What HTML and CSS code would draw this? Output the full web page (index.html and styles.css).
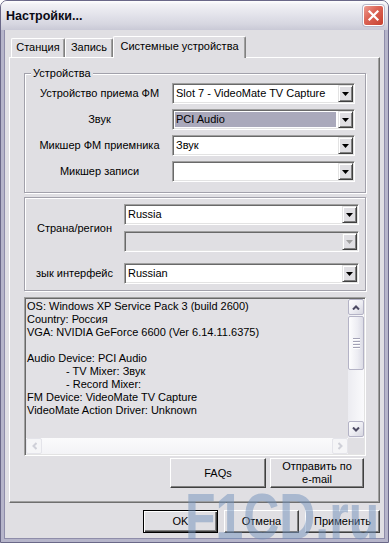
FILE: index.html
```html
<!DOCTYPE html>
<html lang="ru">

<head>
    <meta charset="UTF-8">
    <meta name="viewport" content="width=device-width, initial-scale=1.0">
    <title>Настройки...</title>
    <link rel="stylesheet" href="styles.css">
</head>

<body>
    <div class="window">
        <div class="titlebar">
            <span class="title">Настройки...</span>
            <span class="close">
                <svg width="13" height="13" viewBox="0 0 13 13"><path d="M2.5 2.5l8 8M10.5 2.5l-8 8" stroke="#fff" stroke-width="2.2" stroke-linecap="square"/></svg>
            </span>
        </div>
        <div class="client">
            <div class="tabs">
                <div class="tab tab-station">Станция</div>
                <div class="tab tab-record">Запись</div>
                <div class="tab active">Системные устройства</div>
            </div>
            <div class="page">
                <fieldset class="group devices">
                    <legend>Устройства</legend>
                    <label>Устройство приема ФМ</label>
                    <div class="combo">
                        <span class="value">Slot 7 - VideoMate TV Capture</span>
                        <span class="drop"><svg width="7" height="4" viewBox="0 0 7 4"><path d="M0 0h7L3.5 4z"/></svg></span>
                    </div>
                    <label>Звук</label>
                    <div class="combo selected">
                        <span class="value">PCI Audio</span>
                        <span class="drop"><svg width="7" height="4" viewBox="0 0 7 4"><path d="M0 0h7L3.5 4z"/></svg></span>
                    </div>
                    <label>Микшер ФМ приемника</label>
                    <div class="combo">
                        <span class="value">Звук</span>
                        <span class="drop"><svg width="7" height="4" viewBox="0 0 7 4"><path d="M0 0h7L3.5 4z"/></svg></span>
                    </div>
                    <label>Микшер записи</label>
                    <div class="combo">
                        <span class="value"></span>
                        <span class="drop"><svg width="7" height="4" viewBox="0 0 7 4"><path d="M0 0h7L3.5 4z"/></svg></span>
                    </div>
                </fieldset>

                <div class="group region">
                    <label class="country">Страна/регион</label>
                    <div class="combo">
                        <span class="value">Russia</span>
                        <span class="drop"><svg width="7" height="4" viewBox="0 0 7 4"><path d="M0 0h7L3.5 4z"/></svg></span>
                    </div>
                    <div class="combo disabled">
                        <span class="value"></span>
                        <span class="drop"><svg width="7" height="4" viewBox="0 0 7 4"><path d="M0 0h7L3.5 4z"/></svg></span>
                    </div>
                    <label class="lang">зык интерфейс</label>
                    <div class="combo lang-combo">
                        <span class="value">Russian</span>
                        <span class="drop"><svg width="7" height="4" viewBox="0 0 7 4"><path d="M0 0h7L3.5 4z"/></svg></span>
                    </div>
                </div>

                <div class="info">
                    <div class="info-text">
                        <div>OS: Windows XP Service Pack 3 (build 2600)</div>
                        <div>Country: Россия</div>
                        <div>VGA: NVIDIA GeForce 6600 (Ver 6.14.11.6375)</div>
                        <div>&nbsp;</div>
                        <div>Audio Device: PCI Audio</div>
                        <div class="indent">- TV Mixer: Звук</div>
                        <div class="indent">- Record Mixer:</div>
                        <div>FM Device: VideoMate TV Capture</div>
                        <div>VideoMate Action Driver: Unknown</div>
                    </div>
                    <div class="vscroll">
                        <span class="sbtn"><svg width="8" height="5" viewBox="0 0 8 5"><polyline points="1,4.5 4,1.5 7,4.5" fill="none" stroke="#4d4b63" stroke-width="2"/></svg></span>
                        <span class="thumb"><i></i><i></i><i></i><i></i></span>
                        <span class="sbtn down"><svg width="8" height="5" viewBox="0 0 8 5"><polyline points="1,0.5 4,3.5 7,0.5" fill="none" stroke="#4d4b63" stroke-width="2"/></svg></span>
                    </div>
                    <div class="hscroll">
                        <span class="sbtn off"><svg width="5" height="8" viewBox="0 0 5 8"><polyline points="4.5,1 1.5,4 4.5,7" fill="none" stroke="#cfd0d8" stroke-width="2"/></svg></span>
                        <span class="sbtn off"><svg width="5" height="8" viewBox="0 0 5 8"><polyline points="0.5,1 3.5,4 0.5,7" fill="none" stroke="#cfd0d8" stroke-width="2"/></svg></span>
                    </div>
                    <div class="corner"></div>
                </div>

                <div class="links">
                    <button class="btn faq">FAQs</button>
                    <button class="btn mail">Отправить по<br>e-mail</button>
                </div>
            </div>

            <div class="actions">
                <button class="btn default">OK</button>
                <button class="btn">Отмена</button>
                <button class="btn">Применить</button>
            </div>
        </div>
        <div class="watermark">F1CD.ru</div>
    </div>
</body>

</html>
```

FILE: styles.css
```css
* {
    margin: 0;
    padding: 0;
    box-sizing: border-box;
}

body {
    background: #ffffff;
    font-family: "Liberation Sans", Arial, sans-serif;
    font-size: 11px;
    color: #000;
}

.window {
    position: relative;
    width: 389px;
    height: 543px;
    display: flex;
    flex-direction: column;
    background: #e0dfe3;
    border: 1px solid #6a6888;
    border-radius: 7px 7px 0 0;
    overflow: hidden;
}

/* title bar */

.titlebar {
    flex: none;
    height: 29px;
    display: flex;
    align-items: center;
    justify-content: space-between;
    padding: 0 4px 0 5px;
    background: linear-gradient(#ffffff 0%, #f1f1f5 12%, #e2e2ea 50%, #d6d6e0 80%, #c9c9d6 100%);
}

.title {
    font-weight: 700;
    font-size: 12.5px;
    color: #0a0a14;
}

.close {
    width: 21px;
    height: 21px;
    display: flex;
    align-items: center;
    justify-content: center;
    border: 1px solid #ffffff;
    border-radius: 3px;
    background: linear-gradient(135deg, #ee9d92 0%, #dc6658 40%, #c8412f 100%);
    box-shadow: 0 0 0 1px #b9b8c9;
}

/* client area */

.client {
    flex: 1;
    display: flex;
    flex-direction: column;
    border: 3px solid #b6b5ca;
    border-top: none;
    box-shadow: inset 1px 0 #8f8daa, inset -1px 0 #8f8daa, inset 0 -1px #8f8daa;
}

.tabs {
    height: 21px;
    margin-top: 6px;
    padding-left: 7px;
    display: flex;
    align-items: flex-end;
}

.tab {
    height: 19px;
    line-height: 17px;
    text-align: center;
    white-space: nowrap;
    border: 1px solid;
    border-color: #ffffff #808080 transparent #ffffff;
    border-bottom: none;
    border-radius: 2px 2px 0 0;
    box-shadow: inset -1px 0 #a0a0a0;
}

.tab-station {
    width: 54px;
}

.tab-record {
    width: 48px;
}

.tab.active {
    position: relative;
    z-index: 1;
    width: 133px;
    height: 22px;
    line-height: 18px;
    margin-bottom: -1px;
    background: #e0dfe3;
}

.page {
    height: 446px;
    margin: 0 5px;
    padding: 9px 13px 14px 14px;
    display: flex;
    flex-direction: column;
    border: 1px solid;
    border-color: #ffffff #6f6f6f #6f6f6f #ffffff;
    box-shadow: inset -1px -1px #a0a0a0;
}

/* group boxes */

.group {
    width: 342px;
    border: 1px solid #a2a1ab;
    box-shadow: 1px 1px #ffffff, inset 1px 1px #ffffff;
}

.group label {
    text-align: center;
    white-space: nowrap;
    line-height: 21px;
}

.devices {
    padding: 3px 10px 10px 2px;
    display: grid;
    grid-template-columns: 145px 183px;
    grid-auto-rows: 21px;
    row-gap: 5px;
}

.devices legend {
    margin-left: 4px;
    padding: 0 2px;
    line-height: 13px;
    background: #e0dfe3;
}

.region {
    margin-top: 4px;
    padding: 6px 6px 6px 0;
    display: grid;
    grid-template-columns: 99px 235px;
    grid-template-rows: 21px 21px 26px;
    row-gap: 6px;
}

.region .country {
    grid-row: 1 / span 2;
    align-self: center;
    line-height: 13px;
}

.region .lang,
.region .lang-combo {
    align-self: end;
}

/* combo boxes */

.combo {
    height: 21px;
    display: flex;
    background: #ffffff;
    border: 1px solid;
    border-color: #a0a0a0 #ffffff #ffffff #a0a0a0;
    box-shadow: inset 1px 1px #696969, inset -1px -1px #e3e3e3;
    padding: 1px;
}

.combo .value {
    flex: 1;
    margin: 1px 2px 1px 1px;
    padding-left: 1px;
    line-height: 15px;
    white-space: nowrap;
    overflow: hidden;
}

.combo.selected .value {
    background: #aaa9bb;
}

.combo .drop {
    width: 15px;
    height: 17px;
    display: flex;
    align-items: center;
    justify-content: center;
    background: #e0dfe3;
    border: 1px solid;
    border-color: #e3e3e3 #404040 #404040 #e3e3e3;
    box-shadow: inset 1px 1px #ffffff, inset -1px -1px #808080;
}

.combo.disabled {
    background: #e0dfe3;
}

.combo.disabled .drop svg {
    fill: #a0a0a0;
}

/* info text box */

.info {
    height: 159px;
    margin-top: 6px;
    display: grid;
    grid-template-columns: 1fr 16px;
    grid-template-rows: 1fr 16px;
    border: 1px solid;
    border-color: #a0a0a0 #ffffff #ffffff #a0a0a0;
    box-shadow: inset 1px 1px #696969, inset -1px -1px #e3e3e3;
    padding: 1px;
    background: #e2e1e5;
}

.info-text {
    padding: 1px 0 0 1px;
    line-height: 13px;
    white-space: nowrap;
    overflow: hidden;
}

.info-text .indent {
    padding-left: 39px;
}

.vscroll {
    display: flex;
    flex-direction: column;
    background: linear-gradient(to right, #ececf1, #fafafc);
}

.sbtn {
    width: 16px;
    height: 16px;
    flex: none;
    display: flex;
    align-items: center;
    justify-content: center;
    border: 1px solid #b4b3c6;
    border-radius: 2px;
    background: linear-gradient(135deg, #ffffff 0%, #ececf2 55%, #d6d6e0 100%);
}

.sbtn.down {
    margin-top: auto;
    margin-bottom: 1px;
}

.thumb {
    height: 54px;
    margin-top: 1px;
    display: flex;
    flex-direction: column;
    align-items: center;
    justify-content: center;
    gap: 1px;
    border: 1px solid #b4b3c6;
    border-radius: 2px;
    background: linear-gradient(to right, #fdfdfe 0%, #ededf3 60%, #dcdce6 100%);
}

.thumb i {
    width: 7px;
    height: 1px;
    background: #a3a2b6;
    box-shadow: 0 1px #ffffff;
    margin-bottom: 1px;
}

.hscroll {
    display: flex;
    justify-content: space-between;
    background: linear-gradient(#fbfbfc, #f3f3f6);
}

.sbtn.off {
    border-color: #e4e4ea;
    background: #f5f5f7;
}

.corner {
    background: #e0dfe3;
}

/* buttons */

.btn {
    font-family: inherit;
    font-size: 11px;
    line-height: 13px;
    color: #000;
    background: #e0dfe3;
    border: 1px solid;
    border-color: #ffffff #404040 #404040 #ffffff;
    box-shadow: inset -1px -1px #808080;
}

.links {
    height: 30px;
    margin-top: 2px;
    padding-right: 2px;
    display: flex;
    justify-content: flex-end;
    gap: 4px;
}

.faq {
    width: 96px;
}

.mail {
    width: 94px;
}

.actions {
    margin-top: 7px;
    padding-right: 5px;
    display: flex;
    justify-content: flex-end;
    gap: 6px;
}

.actions .btn {
    width: 75px;
    height: 23px;
}

.actions .default {
    border-color: #000;
    box-shadow: inset 1px 1px #ffffff, inset -1px -1px #404040, inset -2px -2px #808080;
}

/* watermark */

.watermark {
    position: absolute;
    left: 184px;
    top: 484px;
    font-size: 64px;
    line-height: 64px;
    font-weight: 700;
    white-space: nowrap;
    color: rgba(114, 145, 187, 0.5);
    transform: scaleX(0.78);
    transform-origin: 0 0;
    pointer-events: none;
}
```
